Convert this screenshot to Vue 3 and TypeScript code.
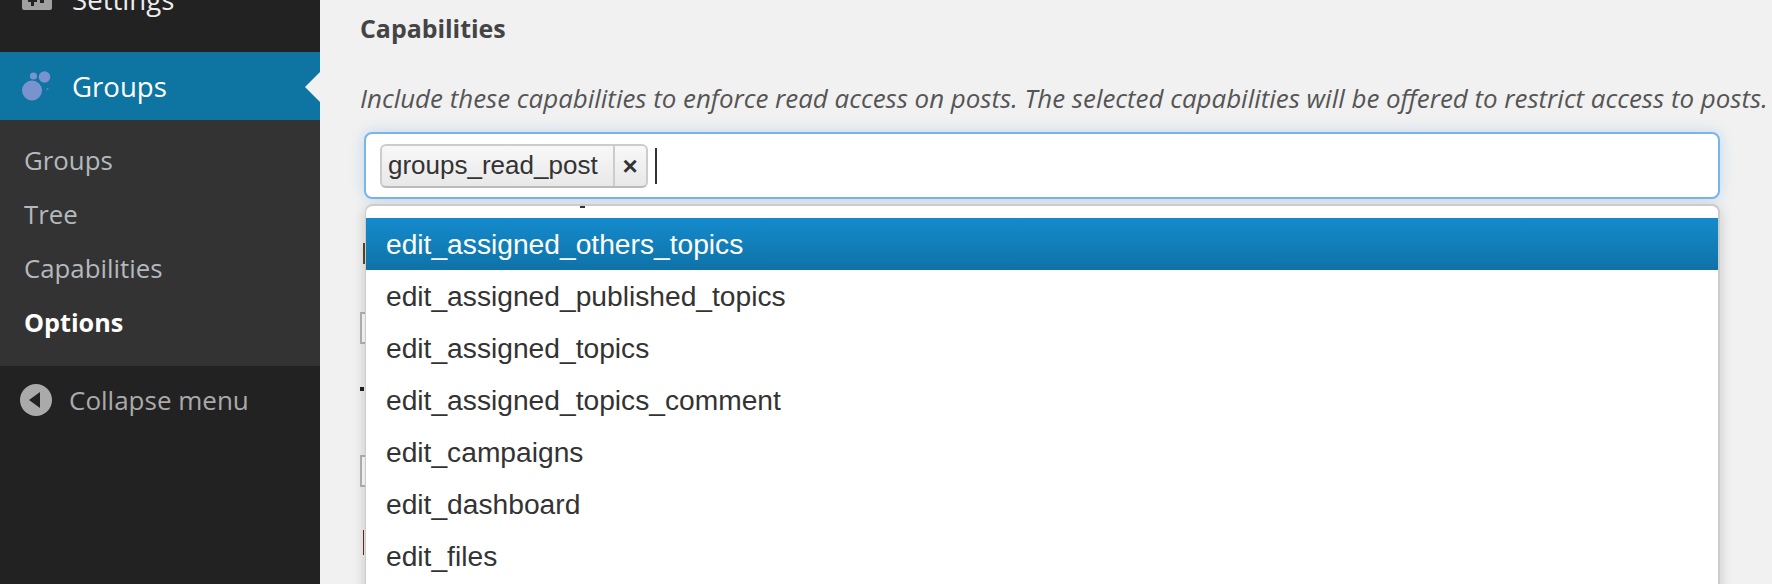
<script setup lang="ts">
const subItems = [
  { label: "Groups", current: false },
  { label: "Tree", current: false },
  { label: "Capabilities", current: false },
  { label: "Options", current: true },
];

const capabilities = [
  "edit_assigned_others_topics",
  "edit_assigned_published_topics",
  "edit_assigned_topics",
  "edit_assigned_topics_comment",
  "edit_campaigns",
  "edit_dashboard",
  "edit_files",
];
</script>

<template>
  <div class="page">
    <aside class="sidebar">
      <div class="menu-settings">
        <svg class="settings-icon" viewBox="0 0 30 30" aria-hidden="true">
          <rect x="0" y="0" width="30" height="30" rx="2" fill="#a0a0a0" />
          <path d="M6 17h9v5h-3v4h-3v-4H6zM18 17h4v6h-4z" fill="#222" />
        </svg>
        <span>Settings</span>
      </div>
      <div class="menu-current">
        <svg class="groups-icon" viewBox="0 0 30 30" aria-hidden="true">
          <circle cx="10" cy="19.5" r="10" fill="#7a93d0" />
          <circle cx="22.5" cy="6" r="5.8" fill="#7a93d0" />
          <circle cx="11.5" cy="5" r="3.6" fill="#7a93d0" />
          <circle cx="25.5" cy="18" r="1" fill="#5d8bbf" />
        </svg>
        <span>Groups</span>
        <i class="arrow"></i>
      </div>
      <ul class="submenu">
        <li v-for="item in subItems" :key="item.label" :class="{ current: item.current }">
          {{ item.label }}
        </li>
      </ul>
      <div class="collapse">
        <span class="collapse-icon"><i></i></span>
        <span>Collapse menu</span>
      </div>
    </aside>

    <main class="content">
      <h3>Capabilities</h3>
      <p class="desc">
        Include these capabilities to enforce read access on posts. The selected capabilities will be offered to restrict access to posts.
      </p>
      <div class="select-wrap">
        <div class="select-box">
          <span class="chip">
            <span class="chip-label">groups_read_post</span>
            <span class="chip-remove">×</span>
          </span>
          <i class="caret"></i>
        </div>
        <div class="dropdown">
          <i class="scrolled-tail"></i>
          <div
            v-for="(cap, index) in capabilities"
            :key="cap"
            class="option"
            :class="{ active: index === 0 }"
          >
            {{ cap }}
          </div>
        </div>
      </div>
      <div class="behind">
        <i class="mark bar"></i>
        <i class="mark box"></i>
        <i class="mark dot"></i>
        <i class="mark box"></i>
        <i class="mark line"></i>
      </div>
    </main>
  </div>
</template>

<style>
html,
body {
  margin: 0;
  background: #f1f1f1;
}
</style>

<style scoped>
.page {
  display: flex;
  width: 1772px;
  height: 584px;
  overflow: hidden;
  background: #f1f1f1;
  font-family: "Open Sans", sans-serif;
}

.sidebar {
  display: flex;
  flex-direction: column;
  flex: 0 0 320px;
  background: #222;
}

.menu-settings {
  display: flex;
  gap: 20px;
  height: 20px;
  padding-left: 22px;
  margin-bottom: 32px;
  overflow: hidden;
  color: #eee;
  font-size: 27.6px;
}

.menu-settings span {
  margin-top: -19px;
  line-height: 36px;
}

.settings-icon {
  flex: none;
  width: 30px;
  height: 30px;
  margin-top: -20px;
}

.menu-current {
  position: relative;
  display: flex;
  align-items: center;
  gap: 20px;
  height: 68px;
  padding-left: 22px;
  color: #fff;
  background: #0e74a1;
  font-size: 27.6px;
}

.groups-icon {
  width: 30px;
  height: 30px;
}

.arrow {
  position: absolute;
  top: 20px;
  right: 0;
  border: 15px solid transparent;
  border-right-color: #f1f1f1;
  border-left-width: 0;
}

.submenu {
  margin: 0;
  padding: 13px 0 17px 24px;
  list-style: none;
  color: #b4b9be;
  background: #333;
  font-size: 25.8px;
}

.submenu li {
  height: 54px;
  line-height: 54px;
}

.submenu li.current {
  color: #fff;
  font-size: 25.2px;
  font-weight: 700;
}

.collapse {
  display: flex;
  align-items: center;
  gap: 17px;
  height: 68px;
  padding-left: 20px;
  color: #aaa;
  font-size: 26px;
}

.collapse-icon {
  display: flex;
  align-items: center;
  justify-content: center;
  width: 32px;
  height: 32px;
  border-radius: 50%;
  background: #aaa;
}

.collapse-icon i {
  margin-left: -4px;
  border: 8px solid transparent;
  border-right: 11px solid #222;
  border-left-width: 0;
}

.content {
  position: relative;
  flex: 1;
  min-width: 0;
  padding: 11px 0 0 40px;
  color: #444;
}

h3 {
  margin: 0;
  font-size: 24.9px;
  font-weight: 700;
  line-height: 34px;
}

.desc {
  margin: 37px 0 0;
  color: #555;
  font-size: 25.9px;
  font-style: italic;
  line-height: 32px;
  white-space: nowrap;
}

.select-wrap {
  position: relative;
  width: 1356px;
  margin: 18px 0 0 4px;
  font-family: "Liberation Sans", Arial, sans-serif;
}

.select-box {
  display: flex;
  align-items: center;
  box-sizing: border-box;
  height: 67px;
  padding: 0 14px;
  border: 2px solid #76b6ea;
  border-radius: 8px;
  background: #fff;
  box-shadow: 0 0 14px rgba(90, 160, 225, 0.3);
}

.chip {
  display: flex;
  align-items: stretch;
  box-sizing: border-box;
  height: 44px;
  border: 2px solid #ccc;
  border-bottom-color: #bbb;
  border-radius: 6px;
  color: #333;
  background: linear-gradient(#f8f8f8, #e8e8e8);
  font-size: 26px;
}

.chip-label {
  padding: 0 15px 0 6px;
  border-right: 2px solid #ccc;
  line-height: 38px;
}

.chip-remove {
  width: 31px;
  font-size: 26px;
  font-weight: 700;
  line-height: 40px;
  text-align: center;
}

.caret {
  width: 2px;
  height: 36px;
  margin-left: 7px;
  background: #333;
}

.dropdown {
  position: absolute;
  top: 72px;
  left: 1px;
  right: 0;
  z-index: 2;
  height: 400px;
  padding-top: 12px;
  overflow: hidden;
  box-sizing: border-box;
  border: 2px solid #ccc;
  border-bottom: 0;
  border-left-width: 1px;
  border-radius: 8px 8px 0 0;
  background: #fff;
  box-shadow: 0 4px 14px rgba(0, 0, 0, 0.18);
}

.scrolled-tail {
  position: absolute;
  top: 0;
  left: 214px;
  width: 5px;
  height: 2px;
  background: #333;
}

.option {
  height: 52px;
  padding-left: 20px;
  color: #333;
  font-size: 28.2px;
  line-height: 52px;
}

.option.active {
  color: #fff;
  background: linear-gradient(#148bcc, #0f72a8);
}

.behind {
  position: absolute;
  top: 0;
  left: 40px;
  width: 8px;
  height: 100%;
}

.mark {
  position: absolute;
  left: 0;
}

.mark.bar {
  top: 243px;
  left: 3px;
  width: 2px;
  height: 21px;
  background: #5a4a22;
}

.mark.box {
  top: 312px;
  width: 8px;
  height: 32px;
  box-sizing: border-box;
  border: 2px solid #b4b4b4;
  background: #fff;
}

.mark.box ~ .mark.box {
  top: 455px;
}

.mark.dot {
  top: 387px;
  left: 0;
  width: 4px;
  height: 4px;
  background: #222;
}

.mark.line {
  top: 530px;
  left: 3px;
  width: 1px;
  height: 25px;
  background: #6b2a1a;
}
</style>
